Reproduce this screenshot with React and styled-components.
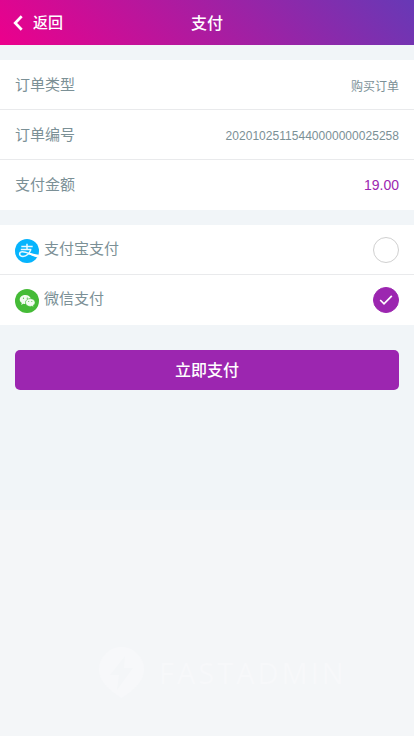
import React from "react";
import styled, { createGlobalStyle } from "styled-components";

const GlobalStyle = createGlobalStyle`
  *, *::before, *::after { box-sizing: border-box; }
  body {
    margin: 0;
    background: #f4f6f8;
    color: #7b9096;
    font-family: "Liberation Sans", "Noto Sans CJK SC", sans-serif;
  }
`;

const Page = styled.div`
  display: flex;
  flex-direction: column;
  height: 736px;
  overflow: hidden;
`;

const Header = styled.header`
  display: grid;
  grid-template-columns: 1fr auto 1fr;
  align-items: center;
  flex: none;
  height: 45px;
  color: #fff;
  background: linear-gradient(45deg, #ec008c, #6739b6);
`;

const BackButton = styled.div`
  display: flex;
  align-items: center;
  gap: 10px;
  padding-left: 13px;
  font-size: 15px;
  font-weight: 500;
  line-height: 45px;
  svg { display: block; }
`;

const Title = styled.h1`
  margin: 0;
  padding-top: 2px;
  font-size: 16px;
  font-weight: 500;
  line-height: 43px;
`;

const Content = styled.main`
  flex: none;
  height: 465px;
  padding-top: 15px;
  background: #f1f5f8;
`;

const Group = styled.section`
  margin-bottom: 15px;
  background: #fff;
`;

const Row = styled.div`
  display: flex;
  align-items: center;
  justify-content: space-between;
  height: 50px;
  padding: 0 15px;
  border-bottom: 1px solid #e9eaec;
  &:last-child { border-bottom-color: transparent; }
`;

const Label = styled.span`
  font-size: 15px;
  line-height: 22px;
`;

const Value = styled.span`
  font-size: ${(p) => (p.$amount ? "14px" : "12px")};
  letter-spacing: ${(p) => (p.$serial ? "0.03px" : "normal")};
  color: ${(p) => (p.$amount ? "#9c26b0" : "inherit")};
  padding-top: ${(p) => (p.$amount ? "0" : p.$serial ? "2px" : "1px")};
`;

const Method = styled.div`
  display: flex;
  align-items: center;
  gap: 5px;
  svg { display: block; margin-top: 3px; }
  ${Label} { margin-top: -1px; }
`;

const Radio = styled.span`
  display: flex;
  align-items: center;
  justify-content: center;
  width: 26px;
  height: 26px;
  border-radius: 50%;
  border: 1px solid ${(p) => (p.$checked ? "#9c26b0" : "#d0d0d0")};
  background: ${(p) => (p.$checked ? "#9c26b0" : "#fff")};
`;

const PayButton = styled.button`
  display: block;
  width: calc(100% - 30px);
  height: 40px;
  margin: 25px 15px 0;
  padding: 1px 0 0;
  border: 0;
  border-radius: 5px;
  background: #9c26b0;
  color: #fff;
  font: 500 16px/39px "Liberation Sans", "Noto Sans CJK SC", sans-serif;
`;

const Brand = styled.footer`
  display: flex;
  align-items: center;
  gap: 15px;
  margin: 137px 0 0 99px;
  color: #f7f8fa;
  svg { display: block; flex: none; }
`;

const BrandName = styled.span`
  font: 500 29px/40px "Open Sans", sans-serif;
  letter-spacing: 3px;
`;

const BackIcon = () => (
  <svg width="10" height="16" viewBox="0 0 10 16" fill="none">
    <path d="M8.7 1.3 2.2 8l6.5 6.7" stroke="#fff" strokeWidth="2.7" />
  </svg>
);

const CheckIcon = () => (
  <svg width="14" height="12" viewBox="0 0 14 12" fill="none">
    <path d="M1.2 6 5 9.8 12.8 1.8" stroke="#fff" strokeWidth="1.7" />
  </svg>
);

const AlipayIcon = () => (
  <svg width="24" height="24" viewBox="0 0 24 24" fill="none">
    <circle cx="12" cy="12" r="12" fill="#06b4fd" />
    <g stroke="#fff" strokeOpacity=".92">
      <path d="M6.3 7.4h11.4M12 4.7v5.9M5.8 10.6h10.5" strokeWidth="1.5" />
      <path d="M15.8 10.6c-1 3.2-4 6.8-7.8 6.8-2.2 0-3.4-1.1-3.4-2.4 0-1.4 1.3-2.2 3-2.2 3.7 0 7.5 2.5 14.8 4.6" strokeWidth="1.5" />
    </g>
    <path d="M14.2 13.6c2.7 1 5.3 1.6 9.5 2.2l-1.2 2.8c-3.5-1.1-6.3-2.3-9.4-3.7z" fill="#fff" />
  </svg>
);

const WechatIcon = () => (
  <svg width="24" height="24" viewBox="0 0 24 24">
    <circle cx="12" cy="12" r="12" fill="#45bb37" />
    <path d="M10.4 5.9c-3.2 0-5.7 2-5.7 4.6 0 1.5.8 2.7 2.1 3.6l-.6 1.8 2.1-1.1c.7.2 1.4.3 2.1.3-.8-3.1 1.8-5.6 5.4-5.5-.5-2.2-2.7-3.7-5.4-3.7z" fill="#fff" fillOpacity=".93" />
    <path d="M15.2 9.7c-2.7 0-4.7 1.7-4.7 3.8 0 2.2 2 3.9 4.7 3.9.6 0 1.2-.1 1.7-.3l1.6.9-.4-1.5c1.2-.8 1.9-1.8 1.9-3 0-2.1-2.1-3.8-4.8-3.8z" fill="#f4fbf3" stroke="#45bb37" strokeWidth=".4" />
    <g fill="#45bb37">
      <circle cx="8.5" cy="9.2" r=".6" />
      <circle cx="12.3" cy="9.2" r=".6" />
      <circle cx="13.7" cy="12.4" r=".5" />
      <circle cx="16.8" cy="12.4" r=".5" />
    </g>
  </svg>
);

const BrandIcon = () => (
  <svg width="45" height="52" viewBox="0 0 45 52">
    <path d="M22.5 0C10 0 0 10 0 22.5 0 36 13 45 22.5 51 32 45 45 36 45 22.5 45 10 35 0 22.5 0z" fill="currentColor" />
    <path d="M26 9 11 28h9l-2 15 16-22h-9z" fill="#f4f6f8" />
  </svg>
);

export default function App() {
  return (
    <Page>
      <GlobalStyle />
      <Header>
        <BackButton><BackIcon />返回</BackButton>
        <Title>支付</Title>
      </Header>
      <Content>
        <Group>
          <Row><Label>订单类型</Label><Value>购买订单</Value></Row>
          <Row><Label>订单编号</Label><Value $serial>20201025115440000000025258</Value></Row>
          <Row><Label>支付金额</Label><Value $amount>19.00</Value></Row>
        </Group>
        <Group>
          <Row><Method><AlipayIcon /><Label>支付宝支付</Label></Method><Radio /></Row>
          <Row><Method><WechatIcon /><Label>微信支付</Label></Method><Radio $checked><CheckIcon /></Radio></Row>
        </Group>
        <PayButton>立即支付</PayButton>
      </Content>
      <Brand><BrandIcon /><BrandName>FASTADMIN</BrandName></Brand>
    </Page>
  );
}
